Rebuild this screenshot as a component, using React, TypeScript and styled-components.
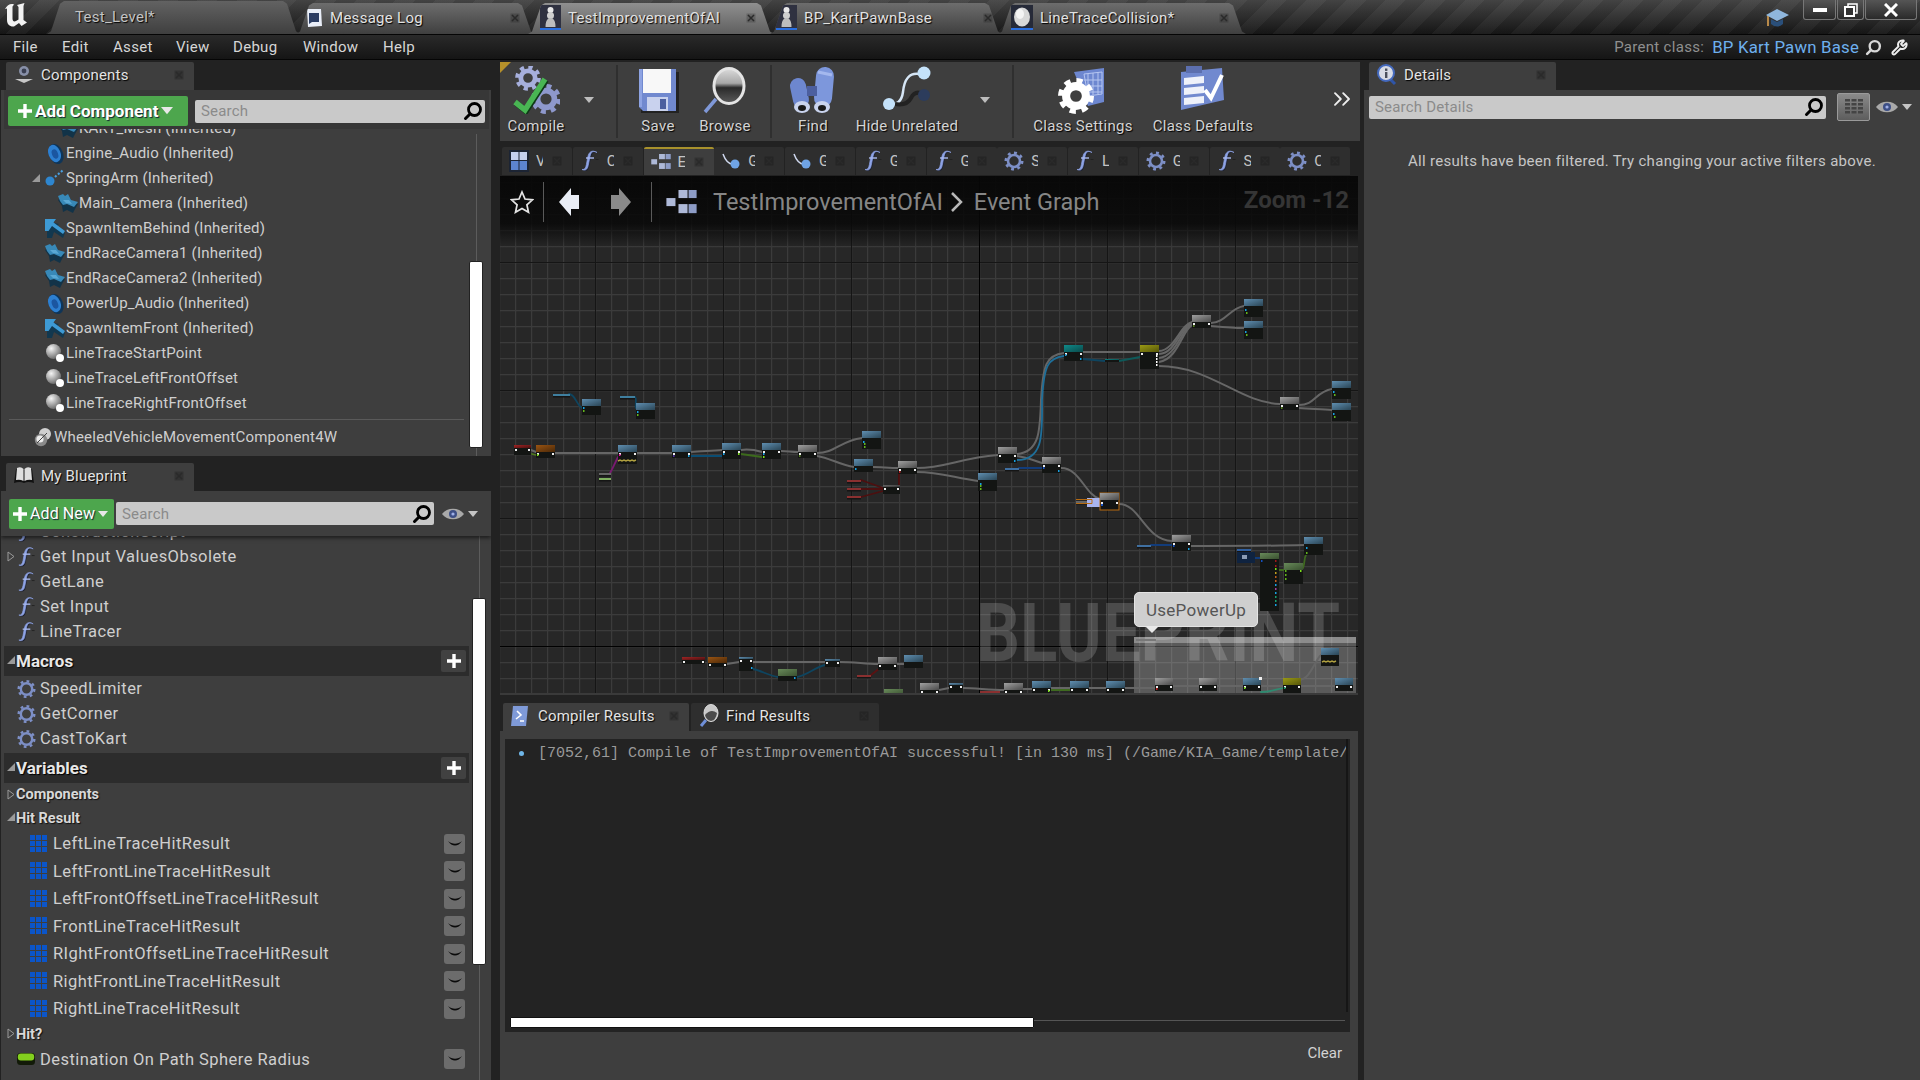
import React from "react";
import styled, { createGlobalStyle } from "styled-components";
import { ChevronsRight, Wrench } from "lucide-react";

const GlobalStyle = createGlobalStyle`
  html, body { margin: 0; padding: 0; background: #222; }
  body { font-family: Roboto, "Liberation Sans", sans-serif; color: #d2d2d2; overflow: hidden; }
  * { box-sizing: border-box; }
  #root { width: 1920px; height: 1080px; overflow: hidden; }
`;

/* ---------- shell ---------- */
const Frame = styled.div`width: 1920px; height: 1080px; display: flex; flex-direction: column; background: #222;`;
const TitleBar = styled.header`
  height: 35px; flex: none; display: flex; align-items: flex-end; position: relative;
  border-bottom: 1px solid #050505;
  background:
    repeating-linear-gradient(135deg, rgba(255,255,255,.035) 0 14px, rgba(0,0,0,.03) 14px 28px),
    linear-gradient(#454545, #161616);
`;
const LogoSlot = styled.div`width: 47px; height: 34px; flex: none; display: flex; align-items: flex-start; padding: 3px 0 0 4px; align-self: flex-start;`;
const DocTab = styled.div<{ $w: number; $ml: number; $pl: number; $tone: "front" | "back" | "world" }>`
  width: ${(p) => p.$w}px; margin-left: ${(p) => p.$ml}px; padding-left: ${(p) => p.$pl}px; padding-bottom: 2px;
  height: ${(p) => (p.$tone === "world" ? 33 : 31)}px; flex: none; display: flex; align-items: center;
  clip-path: polygon(0 100%, 4px 92%, 13px 8%, 17px 0, calc(100% - 17px) 0, calc(100% - 13px) 8%, calc(100% - 4px) 92%, 100% 100%);
  background: ${(p) =>
    p.$tone === "front" ? "linear-gradient(#8f8f8f, #5f5f5f)" : p.$tone === "world" ? "linear-gradient(#626262, #3f3f3f)" : "linear-gradient(#6d6d6d, #3f3f3f)"};
`;
const DocLabel = styled.span<{ $dim?: boolean; $flush?: boolean }>`
  font-size: 15px; letter-spacing: .28px; margin-left: ${(p) => (p.$flush ? 0 : 7)}px; color: ${(p) => (p.$dim ? "#c4c4c4" : "#e2e2e2")}; text-shadow: 1px 1px 1px #000; white-space: nowrap;
`;
const DocClose = styled.span<{ $r: number }>`margin-left: auto; margin-right: ${(p) => p.$r}px; display: flex;`;
const TitleRight = styled.div`margin-left: auto; display: flex; align-items: flex-start; align-self: flex-start; height: 34px;`;
const CapSlot = styled.div`margin: 7px 14px 0 0; display: flex;`;
const WinBtn = styled.div<{ $w: number }>`
  width: ${(p) => p.$w}px; height: 20px; display: flex; align-items: center; justify-content: center;
  border: 1px solid #777; border-top: none; border-radius: 0 0 3px 3px; background: linear-gradient(#555, #2a2a2a);
`;
const WinRow = styled.div`display: flex; gap: 1px; margin-right: 3px;`;

const MenuBar = styled.nav`
  height: 25px; flex: none; display: flex; align-items: center; padding: 0 12px 0 13px;
  border-bottom: 1px solid #050505; background: linear-gradient(#2a2a2a, #151515);
`;
const MenuItem = styled.span<{ $w: number }>`width: ${(p) => p.$w}px; font-size: 15px; letter-spacing: .3px; color: #d6d6d6; flex: none;`;
const ParentInfo = styled.div`margin-left: auto; display: flex; align-items: center;`;
const ParentLabel = styled.span`font-size: 15px; letter-spacing: .3px; color: #8f8f8f; margin-right: 8px;`;
const ParentLink = styled.span`font-size: 16.8px; letter-spacing: .2px; color: #6eb0ee;`;
const ParentIcon = styled.span<{ $ml: number }>`display: flex; margin-left: ${(p) => p.$ml}px;`;

const Workspace = styled.main`flex: 1; display: flex; padding-top: 2px; min-height: 0;`;
const LeftColumn = styled.section`width: 491px; flex: none; display: flex; flex-direction: column; padding-left: 1px;`;
const CenterColumn = styled.section`width: 858px; margin-left: 9px; flex: none; display: flex; flex-direction: column;`;
const RightColumn = styled.section`margin-left: 6px; flex: 1; display: flex; flex-direction: column;`;

/* ---------- dock tabs ---------- */
const DockTabRow = styled.div<{ $mt?: number }>`display: flex; height: 28px; flex: none; padding-left: 5px; margin-top: ${(p) => p.$mt ?? 0}px;`;
const DockTab = styled.div<{ $on?: boolean; $w?: number; $gap?: number }>`
  width: ${(p) => p.$w ?? 188}px; display: flex; align-items: center; padding: 0 10px 2px 8px; gap: ${(p) => p.$gap ?? 7}px; border-radius: 2px 2px 0 0;
  background: ${(p) => (p.$on ? "#3e3e3e" : "#2e2e2e")}; font-size: 15px; letter-spacing: .2px; color: #e4e4e4; text-shadow: 1px 1px 1px #000;
`;
const DockClose = styled.span`margin-left: auto; display: flex;`;
const Panel = styled.div<{ $h?: number }>`
  ${(p) => (p.$h ? `height:${p.$h}px; flex:none;` : "flex:1; min-height:0;")}
  background: #3e3e3e; display: flex; flex-direction: column; position: relative; overflow: hidden;
`;

/* ---------- left panels ---------- */
const CompBar = styled.div`height: 39px; flex: none; margin: 0 2px 0 3px; background: #373737; display: flex; align-items: center; padding: 3px 0 0 4px;`;
const BpBar = styled.div`height: 45px; flex: none; background: #3e3e3e; display: flex; align-items: center; padding: 0 0 0 8px; box-shadow: 0 2px 4px rgba(0,0,0,.55); position: relative; z-index: 2;`;
const GreenBtn = styled.div<{ $w: number; $bold?: boolean }>`
  width: ${(p) => p.$w}px; height: 30px; flex: none; display: flex; align-items: center; padding-left: ${(p) => (p.$bold ? 10 : 4)}px; gap: 3px;
  background: #4da64d; border-radius: 2px; color: #fff; font-size: ${(p) => (p.$bold ? 17 : 16)}px; font-weight: ${(p) => (p.$bold ? 700 : 400)};
  text-shadow: 1px 1px 1px #123; letter-spacing: ${(p) => (p.$bold ? "0" : ".1px")};
`;
const SearchBox = styled.div<{ $w: number; $ml: number }>`
  width: ${(p) => p.$w}px; margin-left: ${(p) => p.$ml}px; height: 23px; flex: none; background: #c9c9c9; border-radius: 2px;
  display: flex; align-items: center; justify-content: space-between; padding: 0 2px 0 6px; font-size: 15px; color: #8b8b8b; letter-spacing: .2px;
`;
const EyeSlot = styled.div<{ $ml: number }>`display: flex; align-items: center; margin-left: ${(p) => p.$ml}px; gap: 4px;`;

const TreeArea = styled.div`flex: 1; position: relative; overflow: hidden; display: flex; flex-direction: column;`;
const TreeRows = styled.div`margin-top: -14px; display: flex; flex-direction: column;`;
const TreeRow = styled.div<{ $indent: number }>`
  height: 25px; flex: none; display: flex; align-items: center; padding-left: ${(p) => p.$indent}px;
  font-size: 15px; letter-spacing: .2px; color: #cfcfcf; white-space: nowrap;
`;
const ArrowSlot = styled.span`width: 14px; flex: none; display: flex;`;
const RowIcon = styled.span`width: 20px; height: 20px; flex: none; display: flex; margin-right: 1px;`;
const TreeRule = styled.div`height: 1px; margin: 4px 27px 4px 8px; background: #5a5a5a; flex: none;`;
const TrackLine = styled.div<{ $x: number; $top: number }>`position: absolute; left: ${(p) => p.$x}px; top: ${(p) => p.$top}px; bottom: 0; width: 1px; background: #5c5c5c;`;
const Thumb = styled.div<{ $x: number; $top: number; $h: number }>`
  position: absolute; left: ${(p) => p.$x}px; top: ${(p) => p.$top}px; width: 14px; height: ${(p) => p.$h}px;
  background: #fff; border: 1px solid #222; border-radius: 2px;
`;

const BpList = styled.div`flex: 1; position: relative; overflow: hidden; display: flex; flex-direction: column;`;
const BpRows = styled.div`margin-top: -17px; display: flex; flex-direction: column;`;
const BpRow = styled.div<{ $h?: number; $pl?: number }>`
  height: ${(p) => p.$h ?? 25}px; flex: none; display: flex; align-items: center; padding-left: ${(p) => p.$pl ?? 16}px; position: relative;
  font-size: 16.5px; letter-spacing: .45px; color: #cfcfcf; white-space: nowrap;
`;
const BpIcon = styled.span`width: 19px; height: 22px; flex: none; display: flex; align-items: center; margin-right: 4px;`;
const RowTwist = styled.span<{ $l?: number }>`position: absolute; left: ${(p) => p.$l ?? 6}px; top: 50%; margin-top: -6px; display: flex;`;
const SectionHead = styled.div`
  height: 30px; flex: none; margin: 2px 22px 0 3px; padding: 0 3px 0 12px; background: #2c2c2c; position: relative; display: flex; align-items: center; justify-content: space-between;
  font-size: 17px; font-weight: 700; color: #e8e8e8; text-shadow: 1px 1px 1px #000;
`;
const PlusBtn = styled.span`width: 25px; height: 22px; background: #414141; border-radius: 2px; display: flex; align-items: center; justify-content: center;`;
const GroupHead = styled.div<{ $h?: number }>`
  height: ${(p) => p.$h ?? 23}px; flex: none; padding-left: 15px; display: flex; align-items: center; position: relative; font-size: 14.5px; font-weight: 700; color: #d8d8d8; text-shadow: 1px 1px 1px #111;
`;
const EyeBtn = styled.span`position: absolute; left: 443px; top: 50%; margin-top: -10px; width: 21px; height: 20px; border-radius: 3px; background: #6c6c6c; display: flex; align-items: center; justify-content: center;`;

/* ---------- toolbar ---------- */
const Toolbar = styled.div`height: 79px; flex: none; background: #3e3e3e; display: flex; position: relative; margin-right: -2px; padding: 3px 0;`;
const CornerFlag = styled.span`position: absolute; left: 0; top: 0; width: 0; height: 0; border-top: 11px solid #b5902a; border-right: 11px solid transparent;`;
const ToolGroup = styled.div<{ $w: number }>`width: ${(p) => p.$w}px; flex: none; display: flex; border-right: 2px solid #2f2f2f;`;
const ToolItem = styled.div<{ $w: number }>`width: ${(p) => p.$w}px; flex: none; display: flex; flex-direction: column; align-items: center; padding-top: 2px;`;
const ToolIcon = styled.span`height: 46px; display: flex; align-items: center; justify-content: center;`;
const ToolLabel = styled.span`margin-top: 3px; height: 20px; line-height: 20px; font-size: 15px; letter-spacing: .3px; color: #d4d4d4; text-shadow: 1px 1px 1px #000; white-space: nowrap;`;
const ToolDrop = styled.span<{ $w: number }>`width: ${(p) => p.$w}px; flex: none; display: flex; justify-content: center; padding-top: 32px;`;
const OverflowBtn = styled.span`margin-left: auto; margin-right: 2px; padding-right: 2px; display: flex; align-items: center; color: #eee; padding-bottom: 5px;`;

const TabStrip = styled.div`margin-top: 6px; height: 28px; flex: none; display: grid; grid-template-columns: repeat(12, 70px); column-gap: .75px; padding-left: 2px;`;
const StripTab = styled.div<{ $on?: boolean }>`
  position: relative; display: flex; align-items: center; padding-left: 7px;
  background: ${(p) => (p.$on ? "#3e3e3e" : "#2e2e2e")}; border-radius: 2px 2px 0 0;
  ${(p) => (p.$on ? "border-top: 2px solid #a8912c;" : "")}
`;
const StripLetter = styled.span`width: 7px; margin-left: 7px; overflow: hidden; font-size: 15px; color: #c4c4c4; flex: none;`;
const StripClose = styled.span`margin-left: 9px; display: flex;`;

/* ---------- graph ---------- */
const Graph = styled.div`margin-top: 1px; height: 519px; flex: none; position: relative; overflow: hidden; background: #262626; border-bottom: 2px solid #3a3a3a;`;
const GraphCanvas = styled.svg`position: absolute; left: 0; top: 0; width: 858px; height: 519px; display: block;`;
const Watermark = styled.text`font-family: Roboto, "Liberation Sans", sans-serif; font-weight: 700; font-size: 81px; fill: rgba(255,255,255,.17);`;
const Breadcrumb = styled.div`
  position: relative; height: 72px; display: flex; align-items: center; padding: 0 9px 20px 10px;
  background: linear-gradient(rgba(6,6,6,.94) 0, rgba(8,8,8,.86) 66%, rgba(8,8,8,0) 100%);
`;
const CrumbRule = styled.span<{ $ml: number }>`width: 1px; height: 40px; background: #5a5a5a; flex: none; margin-left: ${(p) => p.$ml}px;`;
const CrumbIcon = styled.span<{ $ml: number }>`margin-left: ${(p) => p.$ml}px; display: flex; flex: none;`;
const CrumbText = styled.span<{ $ml: number }>`margin-left: ${(p) => p.$ml}px; font-size: 23.5px; color: #868686; white-space: nowrap;`;
const ZoomLabel = styled.span`margin-left: auto; font-size: 24px; font-weight: 700; color: #353535; margin-top: -4px;`;
const Bubble = styled.div`
  position: absolute; left: 634px; top: 416px; width: 124px; height: 35px; background: #cfcfcf; border: 1px solid #e4e4e4; border-radius: 5px;
  display: flex; align-items: center; justify-content: center; font-size: 17px; letter-spacing: .3px; color: #555;
  &::after { content: ""; position: absolute; left: 10px; top: 100%; border: 7px solid transparent; border-top-color: #e8e8e8; border-bottom: 0; }
`;

/* ---------- lower ---------- */
const LowerTabs = styled.div`margin-top: 8px; height: 28px; flex: none; display: flex; padding-left: 3px; gap: 2px;`;
const LowerPanel = styled.div`flex: 1; background: #3e3e3e; padding: 8px 8px 0 5px; display: flex; flex-direction: column; min-height: 0;`;
const LogBox = styled.div`height: 293px; flex: none; background: #232323; position: relative; padding: 5px 0 0 14px; overflow: hidden;`;
const LogLine = styled.div`display: flex; align-items: center; height: 18px; font-family: "Liberation Mono", "DejaVu Sans Mono", monospace; font-size: 15px; color: #9a9a9a; white-space: nowrap;`;
const LogDot = styled.span`width: 5px; height: 5px; border-radius: 50%; background: #6fb6e8; margin-right: 14px; flex: none;`;
const HBarTrack = styled.div`position: absolute; left: 5px; right: 5px; top: 281px; height: 1px; background: #555;`;
const HBarThumb = styled.div`position: absolute; left: 5px; top: 278px; width: 522px; height: 9px; background: #fff; border: 1px solid #111; border-radius: 1px; box-sizing: content-box;`;
const LogEdge = styled.div`position: absolute; right: 2px; top: 0; bottom: 20px; width: 2px; background: #161616;`;
const ClearRow = styled.div`flex: none; padding: 12px 8px 0 0; display: flex; justify-content: flex-end; font-size: 15px; color: #d2d2d2;`;

/* ---------- details ---------- */
const DetailsSearchRow = styled.div`display: flex; align-items: center; padding: 3px 0 0 5px; flex: none;`;
const GridBtn = styled.span`width: 33px; height: 28px; margin-left: 11px; background: linear-gradient(#8a8a8a, #5d5d5d); border: 1px solid #9a9a9a; border-radius: 2px; display: flex; align-items: center; justify-content: center;`;
const EmptyNote = styled.p`margin: 30px 0 0; height: 20px; line-height: 20px; text-align: center; font-size: 15px; letter-spacing: .3px; color: #c6c6c6;`;

/* ---------- icons ---------- */
const Cross = ({ c = "#2a2a2a" }: { c?: string }) => (
  <svg width="10" height="10" viewBox="0 0 10 10"><rect x=".5" y=".5" width="9" height="9" fill="#000" opacity=".18" /><path d="M2 2l6 6M8 2l-6 6" stroke={c} strokeWidth="1.5" /></svg>
);
const Lens = ({ s = 20, c = "#000" }: { s?: number; c?: string }) => (
  <svg width={s} height={s} viewBox="0 0 20 20"><circle cx="11.5" cy="8.5" r="6" fill="none" stroke={c} strokeWidth="2.8" /><path d="M7 13l-4.5 4.5" stroke={c} strokeWidth="3" strokeLinecap="round" /></svg>
);
const Eye = () => (
  <svg width="22" height="14" viewBox="0 0 22 14"><path d="M0 7C5 0 17 0 22 7C17 14 5 14 0 7Z" fill="#a9a9a9" /><circle cx="11" cy="7" r="4" fill="#3d4f86" /><circle cx="11" cy="7" r="1.6" fill="#9fb0e8" /></svg>
);
const DownTri = ({ c = "#c4c4c4", w = 10 }: { c?: string; w?: number }) => (
  <svg width={w} height={w * 0.6} viewBox="0 0 10 6"><path d="M0 0H10L5 6Z" fill={c} /></svg>
);
const TwistOpen = () => (
  <svg width="10" height="10" viewBox="0 0 10 10"><path d="M9 1V9H1Z" fill="#9a9a9a" /></svg>
);
const TwistShut = () => (
  <svg width="8" height="11" viewBox="0 0 8 11"><path d="M1 1L7 5.5L1 10Z" fill="none" stroke="#9a9a9a" /></svg>
);
const Fn = ({ s = 20 }: { s?: number }) => (
  <svg width={s} height={s * 1.1} viewBox="0 0 20 22">
    <path d="M17 2.500C13 .2 10.800 2 10 6.500L8.200 15.500C7.300 20 5 20.800 2 19.500C5 19.800 5.600 18 6.400 14.500L7.800 7C8.700 2.400 11.500-.8 17 2.500Z" fill="#1c2030" transform="translate(1 1)" />
    <path d="M17 2.500C13 .2 10.800 2 10 6.500L8.200 15.500C7.300 20 5 20.800 2 19.500C5 19.800 5.600 18 6.400 14.500L7.800 7C8.700 2.400 11.500-.8 17 2.500Z" fill="#8ea3e6" stroke="#8ea3e6" strokeWidth=".7" />
    <path d="M6 8H14" stroke="#aab9ee" strokeWidth="1.400" />
    <path d="M15.500 9.500h3" stroke="#222" strokeWidth="1" />
  </svg>
);
const Cog = ({ s = 20, c = "#7d8fc6" }: { s?: number; c?: string }) => (
  <svg width={s} height={s} viewBox="0 0 20 20">
    <circle cx="10" cy="10" r="6" fill="none" stroke={c} strokeWidth="2.6" />
    <circle cx="10" cy="10" r="8.2" fill="none" stroke={c} strokeWidth="2.6" strokeDasharray="2.9 3.5" />
  </svg>
);
const Speaker = () => (
  <svg width="20" height="22" viewBox="0 0 20 22"><ellipse cx="11" cy="11" rx="7" ry="10.500" transform="rotate(-22 11 11)" fill="#0f3558" /><ellipse cx="9.500" cy="10.500" rx="6" ry="9" transform="rotate(-22 9.500 10.500)" fill="#2d7fd0" /><ellipse cx="10" cy="11" rx="3" ry="4.800" transform="rotate(-22 10 11)" fill="#1b56a0" /></svg>
);
const Spring = () => (
  <svg width="20" height="20" viewBox="0 0 20 20"><circle cx="5" cy="13" r="4.500" fill="#2e86cf" /><path d="M10 9l1.500-1.500M13 6.500l1.500-1.500M16 4l1.500-1.500" stroke="#4aa0e0" strokeWidth="2" /></svg>
);
const Cam = () => (
  <svg width="20" height="20" viewBox="0 0 20 20">
    <path d="M0 7L6 3L9 6L12 5L14 10L20 11L17 16L15 20L9 17L5 19L4 13Z" fill="#123348" />
    <path d="M0 3L5 1L7 3L10 1L13 7L20 9L16 14L9 11L5 12L2 8Z" fill="#3889b8" />
    <path d="M5 7L11 7L14 11L8 10Z" fill="#5aa8d4" />
  </svg>
);
const Spawn = () => (
  <svg width="20" height="20" viewBox="0 0 20 20">
    <path d="M0 3H2V20H7L9 14L18 20L20 15L11 9L14 6Z" fill="#12384f" />
    <path d="M0 1H11L8.500 4.500L20 13L18 16L7 8L3.500 13L0 13Z" fill="#3e9ad4" />
  </svg>
);
const Orb = () => (
  <svg width="20" height="20" viewBox="0 0 20 20"><defs><radialGradient id="orbf" cx=".35" cy=".3" r=".8"><stop offset="0" stopColor="#f4f4f4" /><stop offset="1" stopColor="#5c5c5c" /></radialGradient></defs><circle cx="8.500" cy="8.500" r="7.500" fill="url(#orbf)" /><circle cx="15" cy="15" r="4" fill="#fff" /></svg>
);
const TwinOrb = () => (
  <svg width="20" height="20" viewBox="0 0 20 20"><circle cx="12" cy="7" r="6" fill="#cfcfcf" /><circle cx="8" cy="13" r="6.200" fill="#8a8a8a" /><circle cx="7" cy="12" r="3.600" fill="#ececec" /><path d="M4 16l10-10" stroke="#444" /></svg>
);
const HitGrid = () => (
  <svg width="18" height="18" viewBox="0 0 18 18" fill="#0b55c9">
    {[0, 6, 12].map((y) => [0, 6, 12].map((x) => <rect key={`${x}-${y}`} x={x} y={y} width="5" height="5" />))}
  </svg>
);
const ClosedEye = () => (
  <svg width="16" height="8" viewBox="0 0 16 8"><path d="M1 1C5 7 11 7 15 1C11 4.500 5 4.500 1 1Z" fill="#0a0a0a" /></svg>
);
const Capsule = () => (
  <svg width="18" height="14" viewBox="0 0 18 14"><rect y="1" width="18" height="12" rx="3.500" fill="#121a08" /><rect x=".8" y="1.500" width="16.400" height="7" rx="3" fill="#83cf1e" /></svg>
);
const Plus = ({ s = 14, w = 3.400 }: { s?: number; w?: number }) => (
  <svg width={s} height={s} viewBox="0 0 14 14"><path d="M7 0V14M0 7H14" stroke="#fff" strokeWidth={w} /></svg>
);
const Pawn = () => (
  <svg width="21" height="25" viewBox="0 0 21 25">
    <rect width="21" height="25" fill="#2f3140" /><rect y="23" width="21" height="2" fill="#2a6fe0" />
    <circle cx="10.500" cy="5" r="3" fill="#e8e8e8" /><circle cx="10.500" cy="10.500" r="3.500" fill="#cfcfcf" /><path d="M5.500 22C5.500 15 8 13 10.500 13S15.500 15 15.500 22Z" fill="#bdbdbd" />
  </svg>
);
const TabOrb = () => (
  <svg width="22" height="25" viewBox="0 0 22 25"><rect width="22" height="25" fill="#262a38" /><rect y="23" width="22" height="2" fill="#2a6fe0" /><ellipse cx="11" cy="12" rx="8" ry="9.500" fill="#d8d8d8" /><ellipse cx="9" cy="9" rx="4" ry="5" fill="#f4f4f4" /></svg>
);
const Bubble2 = () => (
  <svg width="18" height="20" viewBox="0 0 18 20"><path d="M2 1H16L17 18L3 19Z" fill="#e9eef8" /><path d="M4 5H14V14H7L4 16Z" fill="#2b3d63" /></svg>
);
const CompIcon = () => (
  <svg width="20" height="20" viewBox="0 0 20 20"><circle cx="10" cy="6" r="5" fill="#8890a8" /><circle cx="10" cy="6" r="2.400" fill="#3a3f52" /><path d="M1 14h18L10 18Z" fill="#c8c8c8" /></svg>
);
const Book = () => (
  <svg width="20" height="20" viewBox="0 0 20 20"><path d="M0 17L2 3Q7 1 10 4Q13 1 18 3L20 17Q14 15 10 17Q6 15 0 17Z" fill="#121212" /><path d="M2 14L3 2Q7 0 9.500 3V15Q6 13 2 14ZM18 14L17 2Q13 0 10.500 3V15Q14 13 18 14Z" fill="#dfdfdf" /></svg>
);
const InfoLens = () => (
  <svg width="20" height="22" viewBox="0 0 20 22"><path d="M13 15l5 5" stroke="#2f55a8" strokeWidth="3" /><circle cx="9" cy="9" r="8" fill="#d7dbe5" stroke="#4469bd" strokeWidth="2" /><rect x="8" y="8" width="2.400" height="6" fill="#4a4f5c" /><rect x="8" y="4.500" width="2.400" height="2.400" fill="#4a4f5c" /></svg>
);
const Shell = () => (
  <svg width="18" height="20" viewBox="0 0 18 20"><path d="M2 0H17L15 20H0Z" fill="#7f9ad8" /><path d="M6 5l4 4-5 4M9 15h4" stroke="#fff" strokeWidth="1.600" fill="none" /></svg>
);
const SilverLens = () => (
  <svg width="20" height="24" viewBox="0 0 20 24"><path d="M7 16L2 22" stroke="#6f8fd8" strokeWidth="3" /><ellipse cx="12" cy="9" rx="7" ry="8.500" fill="#c8c8c8" stroke="#dcdcdc" /><path d="M6 11Q12 4 18 9 17 16 12 17 7 16 6 11Z" fill="#4b4b4b" /></svg>
);
const Cap = () => (
  <svg width="24" height="22" viewBox="0 0 24 22"><path d="M3 8V19" stroke="#b88a4a" strokeWidth="2" /><path d="M12 2L24 8L12 14L1 8Z" fill="#8fb6dc" /><path d="M6 12V17Q12 22 18 17V12L12 15Z" fill="#2a4f7a" /></svg>
);
const UeLogo = () => (
  <svg width="24" height="24" viewBox="0 0 24 24" fill="#f2f2f2">
    <path d="M1 6C3 2 7 0 10 1.500L8.500 3.500V15.500C8.500 18 10 19 12 18L14.500 16.500V4L13 2 20.500 0 19.500 3V17L23 19.500 17.500 23 15 20 10 23.500C6 24 3 21.500 3 17V5.500Z" />
  </svg>
);
const Gridlet = () => (
  <svg width="20" height="22" viewBox="0 0 20 22"><rect width="20" height="22" fill="#1c2433" /><path d="M2 2H9.500V10H2ZM10.500 2H18V10H10.500Z" fill="#c4d0ee" /><path d="M2 11H9.500V20H2ZM10.500 11H18V20H10.500Z" fill="#5c84cf" /></svg>
);
const GraphMark = ({ s = 20 }: { s?: number }) => (
  <svg width={s} height={s * 0.78} viewBox="0 0 30 24">
    <rect x="12" y="0" width="9" height="8" fill="#aeb9d8" /><rect x="22" y="0" width="8" height="8" fill="#8d9cc6" />
    <rect x="0" y="8" width="9" height="8" fill="#aeb9d8" /><rect x="12" y="14" width="9" height="9" fill="#aeb9d8" /><rect x="22" y="14" width="8" height="9" fill="#8d9cc6" />
  </svg>
);
const Wirelet = () => (
  <svg width="20" height="20" viewBox="0 0 20 20"><path d="M2 3Q6 14 13 13" fill="none" stroke="#cfd8ee" strokeWidth="1.500" /><circle cx="14" cy="13" r="4.500" fill="#6fa4e6" /></svg>
);
const Star = () => (
  <svg width="24" height="24" viewBox="0 0 24 24"><path d="M12 2l3 7 7.500.8-5.600 5 1.600 7.400L12 18.400 5.500 22.200 7.100 14.800 1.500 9.800 9 9Z" fill="none" stroke="#e4e4e4" strokeWidth="1.700" /></svg>
);
const Back = ({ c }: { c: string }) => (
  <svg width="22" height="30" viewBox="0 0 22 30"><path d="M13 1L1 15L13 29V22H21V8H13Z" fill={c} /></svg>
);
const Fwd = ({ c }: { c: string }) => (
  <svg width="22" height="30" viewBox="0 0 22 30"><path d="M9 1L21 15L9 29V22H1V8H9Z" fill={c} /></svg>
);

function Gearish({ c }: { c: string }) {
  return (
    <g>
      <circle cx="10" cy="10" r="6" fill="none" stroke={c} strokeWidth="4" />
      <circle cx="10" cy="10" r="9" fill="none" stroke={c} strokeWidth="3.400" strokeDasharray="3.500 3.570" />
    </g>
  );
}
const CompileIcon = () => (
  <svg width="48" height="48" viewBox="0 0 48 48">
    <g transform="translate(4 0) scale(1.200)"><Gearish c="#a6afdc" /></g>
    <g transform="translate(20 19) scale(1.400)"><Gearish c="#8e98cc" /></g>
    <path d="M3 36L13 44L33 13" fill="none" stroke="#0e3a17" strokeWidth="6" transform="translate(1 1)" />
    <path d="M3 36L13 44L33 13" fill="none" stroke="#49b553" strokeWidth="5.500" />
  </svg>
);
const SaveIcon = () => (
  <svg width="44" height="48" viewBox="0 0 44 48">
    <path d="M5 6H43V47H5Z" fill="#0b0b0b" opacity=".55" />
    <path d="M3 3H40V45H7L3 41Z" fill="#7189cf" />
    <path d="M3 3H6V41L3 41Z" fill="#8ea3e2" />
    <rect x="7" y="3" width="28" height="24" fill="#f8f8f8" />
    <rect x="11" y="31" width="21" height="14" fill="#c9d2ee" /><rect x="24" y="33" width="6" height="10" fill="#4c5f9f" />
  </svg>
);
const BrowseIcon = () => (
  <svg width="50" height="48" viewBox="0 0 50 48">
    <defs><linearGradient id="brw" x1="0" y1="0" x2="0" y2="1"><stop offset="0" stopColor="#dcdcdc" /><stop offset=".42" stopColor="#a8a8a8" /><stop offset=".55" stopColor="#2a2a2a" /><stop offset="1" stopColor="#5c5c5c" /></linearGradient></defs>
    <path d="M16 33L5 46" stroke="#7f98d8" strokeWidth="3.500" />
    <ellipse cx="29" cy="20" rx="15" ry="17.500" fill="url(#brw)" stroke="#e4e4e4" strokeWidth="3" />
  </svg>
);
const FindIcon = () => (
  <svg width="50" height="48" viewBox="0 0 50 48">
    <path d="M13 34L10 20" stroke="#6d87cf" strokeWidth="16" strokeLinecap="round" />
    <path d="M35 32L37 10" stroke="#7d97dc" strokeWidth="18" strokeLinecap="round" />
    <path d="M30 6L44 9" stroke="#a4b8ee" strokeWidth="3" />
    <rect x="19" y="20" width="10" height="10" fill="#4c5f9f" />
    <ellipse cx="14" cy="41" rx="8" ry="6" fill="#cad4ee" /><ellipse cx="14" cy="42" rx="4" ry="3" fill="#1a1a1a" />
    <ellipse cx="34" cy="41" rx="8" ry="6" fill="#cad4ee" /><ellipse cx="34" cy="42" rx="4" ry="3" fill="#1a1a1a" />
  </svg>
);
const HideIcon = () => (
  <svg width="52" height="48" viewBox="0 0 52 48">
    <path d="M8 38Q20 40 22 26Q24 6 38 8" fill="none" stroke="#d6e6f6" strokeWidth="2.500" />
    <path d="M14 38Q26 40 30 32T42 28" fill="none" stroke="#222" strokeWidth="4" />
    <circle cx="8" cy="38" r="6" fill="#c4e2fa" /><circle cx="43" cy="7" r="6.500" fill="#c4e2fa" /><circle cx="43" cy="29" r="6" fill="#2c3c5c" />
  </svg>
);
const SettingsIcon = () => (
  <svg width="50" height="48" viewBox="0 0 50 48">
    <path d="M16 6L46 2V36L30 40Z" fill="#6d87d0" />
    <path d="M26 8L44 6V28L30 30ZM30 8V30M35 7V29M40 6V28M26 14H44M27 20H44M28 26H44" fill="none" stroke="#b6c6f0" strokeWidth="1" />
    <g transform="translate(0 12) scale(1.800)"><circle cx="10" cy="10" r="5.500" fill="none" stroke="#fff" strokeWidth="4.500" /><circle cx="10" cy="10" r="8.500" fill="none" stroke="#fff" strokeWidth="3" strokeDasharray="3.400 3.270" /></g>
  </svg>
);
const DefaultsIcon = () => (
  <svg width="50" height="48" viewBox="0 0 50 48">
    <path d="M3 6L44 2L46 34L3 44Z" fill="#7189cf" /><rect x="8" y="0" width="16" height="7" fill="#5c6fae" />
    <path d="M6 12L26 10V17L6 19ZM6 22L26 20V27L6 29ZM6 32L26 30V37L6 39Z" fill="#eef1fa" />
    <path d="M27 24L33 32L44 9" fill="none" stroke="#fff" strokeWidth="4" />
  </svg>
);

/* ---------- graph data ---------- */
type Kind = "blue" | "grey" | "orange" | "red" | "teal" | "yellow" | "green" | "dark";
type GNode = { x: number; y: number; w?: number; h: number; k: Kind; pins?: [number, number, string][]; hh?: number; ends?: boolean };
const nodes: GNode[] = [
  { x: 582, y: 399, h: 16, k: "blue", pins: [[1, 8, "#19a0e0"], [1, 11, "#62b51c"]], ends: false },
  { x: 636, y: 403, h: 16, k: "blue", pins: [[1, 8, "#19a0e0"], [1, 11, "#62b51c"]], ends: false },
  { x: 514, y: 445, w: 17, h: 10, k: "red", hh: 3 },
  { x: 536, y: 445, h: 13, k: "orange", pins: [[1, 9, "#7ce01c"]] },
  { x: 618, y: 445, h: 19, k: "blue", pins: [[1, 9, "#e010a0"]] },
  { x: 672, y: 445, h: 13, k: "blue", pins: [[16, 10, "#19a0e0"], [1, 10, "#4a2a9a"]] },
  { x: 722, y: 443, h: 16, k: "blue", pins: [[1, 10, "#19a0e0"], [16, 10, "#7ce01c"]] },
  { x: 762, y: 443, h: 16, k: "blue", pins: [[1, 10, "#19a0e0"], [1, 13, "#7ce01c"]] },
  { x: 798, y: 445, h: 13, k: "grey", pins: [[1, 10, "#4f7a1c"]] },
  { x: 862, y: 431, h: 18, k: "blue", pins: [[1, 10, "#19a0e0"], [2, 12, "#62b51c"], [2, 15, "#62b51c"]], ends: false },
  { x: 854, y: 459, h: 13, k: "blue", pins: [[1, 9, "#19a0e0"]], ends: false },
  { x: 898, y: 461, h: 13, k: "grey", pins: [[1, 10, "#b01818"]] },
  { x: 978, y: 473, h: 18, k: "blue", pins: [[2, 10, "#19a0e0"], [2, 12, "#62b51c"], [2, 15, "#62b51c"]], ends: false },
  { x: 883, y: 485, w: 17, h: 9, k: "dark", hh: 2 },
  { x: 708, y: 657, h: 10, k: "orange", hh: 6 },
  { x: 739, y: 657, w: 14, h: 14, k: "blue", hh: 2, pins: [[12, 10, "#19a0e0"]] },
  { x: 778, y: 669, h: 12, k: "green", pins: [[16, 8, "#19a0e0"]], ends: false },
  { x: 825, y: 659, w: 15, h: 8, k: "blue", hh: 2 },
  { x: 878, y: 657, h: 13, k: "grey" },
  { x: 904, y: 655, h: 13, k: "blue", ends: false },
  { x: 682, y: 657, w: 23, h: 7, k: "red", hh: 3 },
  { x: 920, y: 683, h: 11, k: "grey" },
  { x: 949, y: 683, w: 14, h: 11, k: "blue", hh: 2 },
  { x: 884, y: 689, h: 5, k: "green", ends: false },
  { x: 1244, y: 299, h: 18, k: "blue", pins: [[1, 10, "#19a0e0"], [2, 13, "#62b51c"]], ends: false },
  { x: 1244, y: 321, h: 18, k: "blue", pins: [[1, 10, "#19a0e0"], [2, 13, "#62b51c"]], ends: false },
  { x: 1192, y: 315, h: 13, k: "grey", pins: [[1, 10, "#4f7a1c"]] },
  { x: 1140, y: 345, h: 24, k: "yellow", pins: [[16, 10, "#fff"], [16, 13, "#fff"], [16, 16, "#fff"], [16, 19, "#fff"]] },
  { x: 1064, y: 345, h: 16, k: "teal", pins: [[1, 9, "#19a0e0"], [16, 13, "#19a0e0"]] },
  { x: 1105, y: 359, w: 14, h: 3, k: "teal", hh: 1, ends: false },
  { x: 1280, y: 397, h: 13, k: "grey", pins: [[1, 10, "#4f7a1c"]] },
  { x: 1332, y: 381, h: 18, k: "blue", pins: [[1, 10, "#19a0e0"], [2, 13, "#62b51c"]], ends: false },
  { x: 1332, y: 403, h: 18, k: "blue", pins: [[1, 10, "#19a0e0"], [2, 13, "#62b51c"]], ends: false },
  { x: 998, y: 447, h: 16, k: "grey", pins: [[16, 13, "#19a0e0"]] },
  { x: 1042, y: 457, h: 16, k: "grey", pins: [[1, 10, "#1450c0"], [16, 13, "#19a0e0"]] },
  { x: 1172, y: 535, h: 16, k: "grey", pins: [[1, 10, "#1450c0"], [16, 13, "#19a0e0"]] },
  { x: 1304, y: 537, h: 18, k: "blue", pins: [[2, 10, "#19a0e0"], [2, 15, "#62b51c"]], ends: false },
  { x: 1260, y: 553, h: 58, k: "green", hh: 6, pins: [[1, 7, "#1450c0"], [15, 7, "#a01818"], [15, 12, "#a01818"], [15, 15, "#7ce01c"], [15, 19, "#c0a020"], [15, 23, "#c06020"], [15, 27, "#c06020"], [15, 31, "#19a0e0"], [15, 35, "#a040a0"], [15, 39, "#19a0e0"], [15, 43, "#19a070"], [15, 47, "#19a070"], [15, 51, "#19a0e0"]], ends: false },
  { x: 1284, y: 563, h: 21, k: "green", pins: [[1, 7, "#62b51c"], [16, 7, "#7ce01c"], [1, 11, "#62b51c"], [1, 15, "#62b51c"]], ends: false },
];
const commentNodes: GNode[] = [
  { x: 1321, y: 648, w: 18, h: 18, k: "blue", ends: false },
  { x: 1155, y: 678, w: 18, h: 13, k: "grey", pins: [[1, 10, "#c01818"]] },
  { x: 1199, y: 678, w: 18, h: 13, k: "grey" },
  { x: 1243, y: 678, w: 18, h: 13, k: "blue", pins: [[1, 9, "#7ce01c"]] },
  { x: 1283, y: 678, w: 18, h: 16, k: "yellow", pins: [[1, 9, "#19a070"]] },
  { x: 1335, y: 678, w: 18, h: 13, k: "blue" },
  { x: 1004, y: 683, h: 11, k: "grey" },
  { x: 1032, y: 681, h: 13, k: "blue", pins: [[16, 9, "#7ce01c"]] },
  { x: 1070, y: 681, h: 13, k: "blue" },
  { x: 1106, y: 681, h: 13, k: "blue" },
];
const execWires = [
  "M531 450L536 452", "M555 453H618", "M637 453H672", "M691 452C700 451 712 451 722 450", "M741 450C748 449 755 450 762 452", "M781 451C787 451 792 452 798 452",
  "M817 453C835 453 840 441 862 438", "M817 456C830 458 840 465 854 467", "M873 467C880 467 890 468 898 468",
  "M917 468C945 468 960 458 998 455", "M917 472C940 472 955 478 978 481", "M1017 454C1040 452 1040 430 1041 400C1043 365 1046 355 1064 353",
  "M1083 352H1140", "M1159 351C1175 350 1180 325 1192 322", "M1159 354C1176 353 1180 327 1192 323", "M1159 358C1177 356 1181 329 1192 324", "M1159 362C1178 359 1182 331 1192 325",
  "M1159 366C1210 366 1240 403 1280 404", "M1211 323C1225 323 1230 308 1244 306", "M1211 326C1222 327 1232 328 1244 328", "M1299 405C1315 405 1315 392 1332 389", "M1299 408C1310 409 1322 409 1332 410",
  "M1017 456C1025 457 1033 460 1042 463", "M1061 468C1080 468 1085 495 1100 499", "M1119 504C1140 504 1145 540 1172 541", "M1191 546C1230 546 1270 546 1304 545",
  "M727 664L739 662", "M753 662H825", "M840 662C855 662 865 664 878 664", "M897 664H904", "M939 690L949 688", "M963 688C975 688 990 690 1004 690", "M1023 689H1032", "M1051 688H1070", "M1089 688H1106", "M1125 688H1155", "M1173 686H1199", "M1217 686H1243", "M1261 686H1283", "M1301 686H1335", "M1299 680C1310 680 1315 660 1321 655",
];
const dataWires: [string, string][] = [
  ["M569 394C575 394 576 404 582 408", "#0e4560"], ["M635 397C637 398 635 404 636 408", "#0e4560"], ["M691 456H722", "#0a4d73"], ["M741 454C748 455 755 456 762 457", "#3c6a1c"],
  ["M1017 460C1045 460 1042 430 1042 400C1044 365 1048 358 1064 356", "#1e6f9a"], ["M1083 359L1105 361", "#0e4560"], ["M1119 361L1140 357", "#0e5a5a"],
  ["M618 457C614 465 612 470 610 473", "#7a1a72"], ["M861 480L883 488", "#4d0f0f"], ["M861 489H883", "#4d0f0f"], ["M861 497L883 491", "#4d0f0f"], ["M899 487V474", "#4d0f0f"],
  ["M1019 468H1042", "#123c7a"], ["M1151 545H1172", "#123c7a"], ["M1093 501H1100", "#123c7a"], ["M1303 568C1305 563 1304 558 1306 555", "#3f6a20"], ["M1279 570H1284", "#3f6a20"], ["M1255 558H1260", "#123c7a"],
  ["M753 669C762 671 770 676 778 677", "#0e4560"], ["M797 677C808 675 815 667 825 665", "#0e4560"], ["M871 675L880 668", "#5a1212"], ["M532 454L536 455", "#4f7a1c"], ["M1051 690H1070", "#3f6a20"], ["M1261 692C1270 692 1275 690 1283 688", "#2f8a70"],
];
const stubs: [number, number, number, string][] = [
  [553, 394, 17, "#3f7f9f"], [620, 396, 15, "#3f7f9f"], [599, 473, 12, "#666"], [599, 478, 12, "#7fb060"], [847, 480, 14, "#8a3030"], [847, 488, 14, "#8a3030"], [847, 496, 14, "#8a3030"], [857, 675, 14, "#8a3030"], [980, 691, 20, "#8a3030"],
  [1005, 468, 14, "#3f6fa0"], [1076, 501, 17, "#666"], [1137, 545, 14, "#3f6fa0"], [1237, 549, 14, "#2f5fa0"],
];

const NodeShape = ({ n }: { n: GNode }) => {
  const w = n.w ?? 19;
  const hh = n.hh ?? 7;
  return (
    <g>
      <rect x={n.x} y={n.y} width={w} height={n.h} fill="#131513" />
      <rect x={n.x} y={n.y} width={w} height={hh} fill={`url(#h-${n.k})`} />
      {n.ends !== false && n.h > 6 && (
        <>
          <rect x={n.x + 1} y={n.y + hh + 1} width="2" height="2" fill="#eee" />
          <rect x={n.x + w - 3} y={n.y + hh + 1} width="2" height="2" fill="#eee" />
        </>
      )}
      {n.pins?.map((p, i) => (
        <rect key={i} x={n.x + p[0]} y={n.y + p[1]} width="1.500" height="2" fill={p[2]} />
      ))}
    </g>
  );
};
const heads: Record<Kind, [string, string]> = {
  blue: ["#5f8eb0", "#2a4555"], grey: ["#a0a0a0", "#4a4a4a"], orange: ["#9a5412", "#4a2808"], red: ["#a02424", "#4a1010"],
  teal: ["#0f8a8a", "#0a4a4a"], yellow: ["#9a9a14", "#55550a"], green: ["#688a5a", "#3a5030"], dark: ["#666", "#333"],
};

const GraphArt = () => (
  <GraphCanvas viewBox="500 176 858 519">
    <defs>
      <pattern id="minor" patternUnits="userSpaceOnUse" x="595" y="390" width="16" height="16"><path d="M.5 0V16M0 .5H16" stroke="#3b3b3b" strokeWidth="1.400" fill="none" /></pattern>
      <pattern id="major" patternUnits="userSpaceOnUse" x="595" y="390" width="128" height="128"><path d="M.5 0V128M0 .5H128" stroke="#151515" strokeWidth="1" fill="none" /></pattern>
      {(Object.keys(heads) as Kind[]).map((k) => (
        <linearGradient key={k} id={`h-${k}`} x1="0" y1="0" x2="1" y2="1"><stop offset="0" stopColor={heads[k][0]} /><stop offset="1" stopColor={heads[k][1]} /></linearGradient>
      ))}
    </defs>
    <rect x="500" y="176" width="858" height="519" fill="#272727" />
    <rect x="500" y="176" width="858" height="519" fill="url(#minor)" />
    <rect x="500" y="176" width="858" height="519" fill="url(#major)" />
    <path d="M979.500 176V695M500 646.500H1358" stroke="#000" strokeWidth="1" />
    <Watermark x="976" y="661" textLength="364" lengthAdjust="spacingAndGlyphs">BLUEPRINT</Watermark>
    <rect x="1134" y="637" width="222" height="58" fill="rgba(255,255,255,.24)" />
    <rect x="1134" y="637" width="222" height="6" fill="rgba(255,255,255,.3)" />
    <rect x="1136" y="639" width="20" height="2" fill="#777" />
    <g fill="none" strokeLinecap="round">
      {execWires.map((d) => <path key={d} d={d} stroke="#666" strokeWidth="2" />)}
      {dataWires.map(([d, c]) => <path key={d} d={d} stroke={c} strokeWidth="1.800" />)}
    </g>
    {stubs.map(([x, y, w, c]) => (
      <g key={`${x}-${y}`}><rect x={x} y={y} width={w} height="2" fill={c} /><rect x={x} y={y + 2} width={w} height="1.500" fill="#151515" /></g>
    ))}
    <rect x="1087" y="498" width="13" height="9" fill="#a9b4ee" />
    <path d="M1076 499.500H1092V503.500H1076" fill="none" stroke="#b76a10" strokeWidth="1" />
    <rect x="1237" y="552" width="18" height="11" fill="#0f2340" /><rect x="1242" y="555" width="5" height="4" fill="#8a9bb5" />
    {nodes.map((n, i) => <NodeShape key={i} n={n} />)}
    {commentNodes.map((n, i) => <NodeShape key={i} n={n} />)}
    <rect x="1100" y="493" width="19" height="17" fill="#131513" stroke="#b76a10" strokeWidth="1" />
    <rect x="1100" y="493" width="19" height="7" fill="url(#h-grey)" />
    <rect x="1101" y="502" width="2" height="2" fill="#eee" /><rect x="1116" y="502" width="2" height="2" fill="#eee" /><rect x="1101" y="504" width="2" height="2" fill="#1450c0" />
    <path d="M618 461l2-1 2 1 2-1 2 1 2-1 2 1 2-1 2 1 2-1" fill="none" stroke="#b0a040" strokeWidth="1.500" />
    <path d="M1322 662l2-1 2 1 2-1 2 1 2-1 2 1 2-1" fill="none" stroke="#b0a040" strokeWidth="1.500" />
    <rect x="1255" y="612" width="2" height="1" fill="#eee" />
    <rect x="1259" y="677" width="3" height="3" fill="#eee" />
  </GraphCanvas>
);

/* ---------- data ---------- */
const menu: [string, number][] = [["File", 49], ["Edit", 51], ["Asset", 63], ["View", 57], ["Debug", 70], ["Window", 80], ["Help", 40]];
const compRows: { t: string; i: React.ReactNode; d: number; a?: boolean }[] = [
  { t: "KART_Mesh (Inherited)", i: <Cam />, d: 43 },
  { t: "Engine_Audio (Inherited)", i: <Speaker />, d: 30 },
  { t: "SpringArm (Inherited)", i: <Spring />, d: 30, a: true },
  { t: "Main_Camera (Inherited)", i: <Cam />, d: 43 },
  { t: "SpawnItemBehind (Inherited)", i: <Spawn />, d: 30 },
  { t: "EndRaceCamera1 (Inherited)", i: <Cam />, d: 30 },
  { t: "EndRaceCamera2 (Inherited)", i: <Cam />, d: 30 },
  { t: "PowerUp_Audio (Inherited)", i: <Speaker />, d: 30 },
  { t: "SpawnItemFront (Inherited)", i: <Spawn />, d: 30 },
  { t: "LineTraceStartPoint", i: <Orb />, d: 30 },
  { t: "LineTraceLeftFrontOffset", i: <Orb />, d: 30 },
  { t: "LineTraceRightFrontOffset", i: <Orb />, d: 30 },
];
const hitRows = ["LeftLineTraceHitResult", "LeftFrontLineTraceHitResult", "LeftFrontOffsetLineTraceHitResult", "FrontLineTraceHitResult", "RIghtFrontOffsetLineTraceHitResult", "RightFrontLineTraceHitResult", "RightLineTraceHitResult"];
const strip: [string, "grid" | "fn" | "graph" | "wire" | "cog"][] = [["V", "grid"], ["C", "fn"], ["E", "graph"], ["G", "wire"], ["G", "wire"], ["G", "fn"], ["G", "fn"], ["S", "cog"], ["L", "fn"], ["G", "cog"], ["S", "fn"], ["C", "cog"]];
const stripIcon = { grid: <Gridlet />, fn: <Fn />, graph: <GraphMark />, wire: <Wirelet />, cog: <Cog /> };

export default function App() {
  return (
    <Frame>
      <GlobalStyle />
      <TitleBar>
        <LogoSlot><UeLogo /></LogoSlot>
        <DocTab $w={253} $ml={0} $pl={28} $tone="world"><DocLabel $dim $flush>Test_Level*</DocLabel></DocTab>
        <DocTab $w={239} $ml={-4} $pl={9} $tone="back"><Bubble2 /><DocLabel>Message Log</DocLabel><DocClose $r={15}><Cross /></DocClose></DocTab>
        <DocTab $w={246} $ml={-7} $pl={12} $tone="front"><Pawn /><DocLabel>TestImprovementOfAI</DocLabel><DocClose $r={18}><Cross /></DocClose></DocTab>
        <DocTab $w={232} $ml={-4} $pl={6} $tone="back"><Pawn /><DocLabel>BP_KartPawnBase</DocLabel><DocClose $r={9}><Cross /></DocClose></DocTab>
        <DocTab $w={248} $ml={-4} $pl={13} $tone="back"><TabOrb /><DocLabel>LineTraceCollision*</DocLabel><DocClose $r={17}><Cross /></DocClose></DocTab>
        <TitleRight>
          <CapSlot><Cap /></CapSlot>
          <WinRow>
            <WinBtn $w={33}><svg width="14" height="4"><rect width="14" height="4" fill="#fff" /></svg></WinBtn>
            <WinBtn $w={27}><svg width="14" height="14" viewBox="0 0 14 14"><rect x="4" y="1" width="9" height="9" fill="none" stroke="#fff" strokeWidth="1.500" /><rect x="1" y="4" width="9" height="9" fill="#333" stroke="#fff" strokeWidth="2" /></svg></WinBtn>
            <WinBtn $w={52}><svg width="14" height="14" viewBox="0 0 14 14"><path d="M1 1L13 13M13 1L1 13" stroke="#fff" strokeWidth="3" /></svg></WinBtn>
          </WinRow>
        </TitleRight>
      </TitleBar>

      <MenuBar>
        {menu.map(([m, w]) => <MenuItem key={m} $w={w}>{m}</MenuItem>)}
        <ParentInfo>
          <ParentLabel>Parent class:</ParentLabel>
          <ParentLink>BP Kart Pawn Base</ParentLink>
          <ParentIcon $ml={6}><Lens s={17} c="#d8d8d8" /></ParentIcon>
          <ParentIcon $ml={9}><Wrench size={17} color="#eee" strokeWidth={2.800} /></ParentIcon>
        </ParentInfo>
      </MenuBar>

      <Workspace>
        <LeftColumn>
          <DockTabRow><DockTab $on><CompIcon />Components<DockClose><Cross /></DockClose></DockTab></DockTabRow>
          <Panel $h={366}>
            <CompBar>
              <GreenBtn $w={180} $bold><Plus />Add Component<DownTri c="#e8e8e8" w={12} /></GreenBtn>
              <SearchBox $w={290} $ml={7}>Search<Lens /></SearchBox>
            </CompBar>
            <TreeArea>
              <TreeRows>
                {compRows.map((r) => (
                  <TreeRow key={r.t} $indent={r.d}>
                    <ArrowSlot>{r.a ? <TwistOpen /> : null}</ArrowSlot>
                    <RowIcon>{r.i}</RowIcon>{r.t}
                  </TreeRow>
                ))}
                <TreeRule />
                <TreeRow $indent={18}><ArrowSlot /><RowIcon><TwinOrb /></RowIcon>WheeledVehicleMovementComponent4W</TreeRow>
              </TreeRows>
              <TrackLine $x={475} $top={5} />
              <Thumb $x={468} $top={132} $h={187} />
            </TreeArea>
          </Panel>

          <DockTabRow $mt={7}><DockTab $on><Book />My Blueprint<DockClose><Cross /></DockClose></DockTab></DockTabRow>
          <Panel>
            <BpBar>
              <GreenBtn $w={105}><Plus />Add New<DownTri c="#e8e8e8" /></GreenBtn>
              <SearchBox $w={318} $ml={2}>Search<Lens /></SearchBox>
              <EyeSlot $ml={8}><Eye /><DownTri /></EyeSlot>
            </BpBar>
            <BpList>
              <BpRows>
                <BpRow><BpIcon><Fn /></BpIcon>ConstructionScript</BpRow>
                <BpRow><RowTwist><TwistShut /></RowTwist><BpIcon><Fn /></BpIcon>Get Input ValuesObsolete</BpRow>
                <BpRow><BpIcon><Fn /></BpIcon>GetLane</BpRow>
                <BpRow><BpIcon><Fn /></BpIcon>Set Input</BpRow>
                <BpRow><BpIcon><Fn /></BpIcon>LineTracer</BpRow>
                <SectionHead><RowTwist $l={2}><TwistOpen /></RowTwist>Macros<PlusBtn><Plus /></PlusBtn></SectionHead>
                <BpRow><BpIcon><Cog /></BpIcon>SpeedLimiter</BpRow>
                <BpRow><BpIcon><Cog /></BpIcon>GetCorner</BpRow>
                <BpRow><BpIcon><Cog /></BpIcon>CastToKart</BpRow>
                <SectionHead><RowTwist $l={2}><TwistOpen /></RowTwist>Variables<PlusBtn><Plus /></PlusBtn></SectionHead>
                <GroupHead><RowTwist><TwistShut /></RowTwist>Components</GroupHead>
                <GroupHead $h={24}><RowTwist $l={5}><TwistOpen /></RowTwist>Hit Result</GroupHead>
                {hitRows.map((t) => (
                  <BpRow key={t} $h={27.500} $pl={29}><BpIcon><HitGrid /></BpIcon>{t}<EyeBtn><ClosedEye /></EyeBtn></BpRow>
                ))}
                <GroupHead><RowTwist><TwistShut /></RowTwist>Hit?</GroupHead>
                <BpRow $h={27}><BpIcon><Capsule /></BpIcon>Destination On Path Sphere Radius<EyeBtn><ClosedEye /></EyeBtn></BpRow>
              </BpRows>
              <TrackLine $x={478} $top={0} />
              <Thumb $x={471} $top={62} $h={367} />
            </BpList>
          </Panel>
        </LeftColumn>

        <CenterColumn>
          <Toolbar>
            <CornerFlag />
            <ToolGroup $w={118}>
              <ToolItem $w={72}><ToolIcon><CompileIcon /></ToolIcon><ToolLabel>Compile</ToolLabel></ToolItem>
              <ToolDrop $w={34}><DownTri c="#bdbdbd" /></ToolDrop>
            </ToolGroup>
            <ToolGroup $w={154}>
              <ToolItem $w={80}><ToolIcon><SaveIcon /></ToolIcon><ToolLabel>Save</ToolLabel></ToolItem>
              <ToolItem $w={54}><ToolIcon><BrowseIcon /></ToolIcon><ToolLabel>Browse</ToolLabel></ToolItem>
            </ToolGroup>
            <ToolGroup $w={242}>
              <ToolItem $w={82}><ToolIcon><FindIcon /></ToolIcon><ToolLabel>Find</ToolLabel></ToolItem>
              <ToolItem $w={106}><ToolIcon><HideIcon /></ToolIcon><ToolLabel>Hide Unrelated</ToolLabel></ToolItem>
              <ToolDrop $w={50}><DownTri c="#bdbdbd" /></ToolDrop>
            </ToolGroup>
            <ToolItem $w={138}><ToolIcon><SettingsIcon /></ToolIcon><ToolLabel>Class Settings</ToolLabel></ToolItem>
            <ToolItem $w={102}><ToolIcon><DefaultsIcon /></ToolIcon><ToolLabel>Class Defaults</ToolLabel></ToolItem>
            <OverflowBtn><ChevronsRight size={28} strokeWidth={1.600} /></OverflowBtn>
          </Toolbar>

          <TabStrip>
            {strip.map(([l, k], i) => (
              <StripTab key={i} $on={i === 2}>
                {stripIcon[k]}<StripLetter>{l}</StripLetter><StripClose><Cross /></StripClose>
              </StripTab>
            ))}
          </TabStrip>

          <Graph>
            <GraphArt />
            <Breadcrumb>
              <Star />
              <CrumbRule $ml={9} />
              <CrumbIcon $ml={14}><Back c="#e9edf5" /></CrumbIcon>
              <CrumbIcon $ml={30}><Fwd c="#8a8a8a" /></CrumbIcon>
              <CrumbRule $ml={19} />
              <CrumbIcon $ml={14}><GraphMark s={31} /></CrumbIcon>
              <CrumbText $ml={16}>TestImprovementOfAI</CrumbText>
              <CrumbIcon $ml={7}><svg width="14" height="22" viewBox="0 0 14 22"><path d="M2 2L11 11L2 20" fill="none" stroke="#b8b8b8" strokeWidth="2.500" /></svg></CrumbIcon>
              <CrumbText $ml={10}>Event Graph</CrumbText>
              <ZoomLabel>Zoom -12</ZoomLabel>
            </Breadcrumb>
            <Bubble>UsePowerUp</Bubble>
          </Graph>

          <LowerTabs>
            <DockTab $on $w={186} $gap={9}><Shell />Compiler Results<DockClose><Cross /></DockClose></DockTab>
            <DockTab $w={188}><SilverLens />Find Results<DockClose><Cross /></DockClose></DockTab>
          </LowerTabs>
          <LowerPanel>
            <LogBox>
              <LogLine><LogDot />[7052,61] Compile of TestImprovementOfAI successful! [in 130 ms] (/Game/KIA_Game/template/</LogLine>
              <HBarTrack />
              <HBarThumb />
              <LogEdge />
            </LogBox>
            <ClearRow>Clear</ClearRow>
          </LowerPanel>
        </CenterColumn>

        <RightColumn>
          <DockTabRow><DockTab $on $w={187}><InfoLens />Details<DockClose><Cross /></DockClose></DockTab></DockTabRow>
          <Panel>
            <DetailsSearchRow>
              <SearchBox $w={457} $ml={0}>Search Details<Lens /></SearchBox>
              <GridBtn>
                <svg width="18" height="18" viewBox="0 0 18 18" fill="#444">
                  {[1, 5, 9, 13].map((y) => <g key={y}><rect x="0" y={y} width="5" height="2.500" /><rect x="6.500" y={y} width="5" height="2.500" /><rect x="13" y={y} width="5" height="2.500" /></g>)}
                </svg>
              </GridBtn>
              <EyeSlot $ml={6}><Eye /><DownTri /></EyeSlot>
            </DetailsSearchRow>
            <EmptyNote>All results have been filtered. Try changing your active filters above.</EmptyNote>
          </Panel>
        </RightColumn>
      </Workspace>
    </Frame>
  );
}
